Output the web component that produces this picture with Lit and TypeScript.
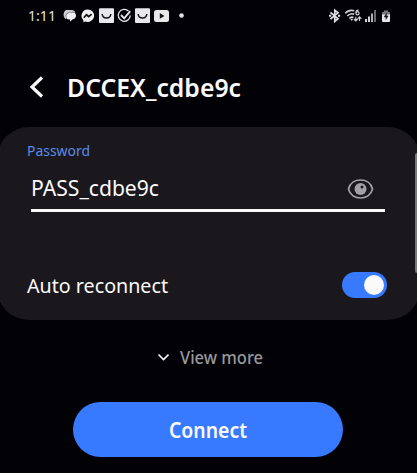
import { LitElement, html, svg, css } from "lit";
import { customElement, property, state } from "lit/decorators.js";

/** A line of text set to an exact measure, like the narrow system typeface. */
@customElement("fit-text")
class FitText extends LitElement {
  @property() text = "";
  @property({ type: Number }) measure = 0;
  @property({ type: Number }) line = 0;
  @property({ type: Number }) baseline = 0;

  static styles = css`
    :host { display: block; flex: none; }
    svg { display: block; overflow: visible; }
    text { fill: currentColor; }
  `;

  render() {
    return html`<svg width=${this.measure} height=${this.line}>
      ${svg`<text x="0" y=${this.baseline} textLength=${this.measure} lengthAdjust="spacingAndGlyphs">${this.text}</text>`}
    </svg>`;
  }
}

@customElement("app-root")
class AppRoot extends LitElement {
  @state() private reconnect = true;

  static styles = css`
    :host {
      display: block;
      position: relative;
      width: 417px;
      height: 473px;
      overflow: hidden;
      background: #020106;
      color: #fafafa;
      font-family: "Noto Sans", sans-serif;
    }
    svg { display: block; flex: none; }
    .status {
      display: flex;
      align-items: center;
      box-sizing: border-box;
      height: 32px;
      padding: 0 26px 0 28px;
      color: #e4e4e6;
      font-size: 14.5px;
    }
    .clock { margin-right: 4px; }
    .spacer { flex: 1; }
    .head {
      display: flex;
      align-items: center;
      height: 95px;
      padding: 15px 0 0 29px;
      box-sizing: border-box;
    }
    .title { font-size: 25.5px; font-weight: 600; margin-left: 22px; }
    .card {
      box-sizing: border-box;
      height: 193px;
      margin: 0 -3px;
      padding: 14px 33px 0 30px;
      border-radius: 32px;
      background: #1a181d;
    }
    .caption { font-size: 15px; color: #5a8ae6; }
    .field {
      display: flex;
      justify-content: space-between;
      align-items: center;
      box-sizing: border-box;
      height: 51px;
      margin: 0 2px 0 4px;
      padding: 8px 11px 0 0;
      border-bottom: 3px solid #fafafa;
    }
    .value { font-size: 22px; }
    .row {
      display: flex;
      justify-content: space-between;
      align-items: center;
      margin-top: 57px;
      height: 32px;
    }
    .name { font-size: 20.8px; }
    .toggle {
      display: flex;
      box-sizing: border-box;
      width: 45px;
      height: 26px;
      padding: 3px;
      border-radius: 13px;
      background: #5a5a60;
    }
    .toggle.on { justify-content: flex-end; background: #387aff; }
    .knob { width: 20px; height: 20px; border-radius: 50%; background: #fafafa; }
    .more {
      display: flex;
      align-items: center;
      height: 74px;
      margin-left: 157px;
      color: #99989c;
    }
    .more-text { font-size: 17.5px; font-weight: 500; margin-left: 11px; }
    .connect {
      display: flex;
      justify-content: center;
      align-items: center;
      width: 270px;
      height: 55px;
      margin: 8px 0 0 73px;
      border-radius: 28px;
      background: #387aff;
    }
    .connect-text { font-size: 20.8px; font-weight: 600; }
    .scroll {
      position: absolute;
      right: -2px;
      top: 153px;
      width: 4px;
      height: 120px;
      border-radius: 2px;
      background: #78777b;
    }
  `;

  private notifications() {
    const bag = (x: number) => svg`
      <rect x=${x} y="8.300" width="15" height="14.700" rx="1" fill="#e8e8ea"/>
      <path d="M${x + 3.2} 14 Q${x + 3.5} 18 ${x + 7.5} 18 T${x + 11.8} 14" fill="none" stroke="#17171b" stroke-width="1.5"/>`;
    return html`<svg width="126" height="32" viewBox="60 0 126 32">
      <path d="M66 10h6q2.500 0 3.500 2.500l-8 1-1.500 5.500h-.5q-2-1.500-2-4.500t2.500-4.500z" fill="#d0d0d4"/>
      <path d="M66.500 18.500q-1-6 4.500-6.500 5-.3 5 3.500 0 3-3.600 4l-2.400 2.300v-2.300q-2.500.2-3.500-1z" fill="#f0f0f2"/>
      <path d="M74.500 12.300h-5q-4 .8-4 4.200" fill="none" stroke="#505056" stroke-width=".6"/>
      <path d="M87.500 9.500a6.400 6.200 0 1 1-2 12l-2 .8-.2-2.300a6.300 6.200 0 0 1 4.200-10.500z" fill="#f0f0f2"/>
      <path d="M83.800 17.800l2.700-3 2.200 1.900 2.900-2.600" fill="none" stroke="#111" stroke-width="1.700"/>
      ${bag(99)}
      <path d="M128.500 11A6 6 0 1 0 130.300 15.500" fill="none" stroke="#e4e4e6" stroke-width="1.300"/>
      <path d="M121 15l3.200 3.400 6-7.200" fill="none" stroke="#e4e4e6" stroke-width="1.900"/>
      ${bag(135)}
      <rect x="154" y="10" width="15" height="12" rx="2.500" fill="#e8e8ea"/>
      <path d="M159.800 13v5.800l4.600-2.900z" fill="#111"/>
      <circle cx="181.500" cy="15.500" r="2.300" fill="#e4e4e6"/>
    </svg>`;
  }

  private system() {
    return html`<svg width="64" height="32" viewBox="327 0 64 32">
      <path d="M330.500 12.500l7.500 6.200-3.200 2.800V10.200l3.200 2.600-7.500 6.200" fill="none" stroke="#e0e0e2" stroke-width="1.700"/>
      <path d="M329 15.800h2.200M338 15.800h2.200" stroke="#e0e0e2" stroke-width="2"/>
      <g fill="none" stroke="#d0d0d4" stroke-width="1.600">
        <path d="M345.300 13.300q3.500-4 9-2.500"/>
        <path d="M347.300 16q3-3.300 6.900-1.800"/>
        <path d="M349.300 18.500q1.900-2 4.200-1"/>
      </g>
      <g fill="none" stroke="#d0d0d4" stroke-width="1.200">
        <path d="M358.500 10.200q-2.500 0-2.600 2.800"/>
        <circle cx="357.500" cy="13.300" r="1.600"/>
      </g>
      <path d="M350.200 18.800h3l-1.500 2.300z" fill="#d0d0d4"/>
      <path d="M355.800 16.800v4M353.900 19l1.900 2 1.900-2M359.500 21v-4M357.600 18.800l1.900-2 1.900 2" fill="none" stroke="#d0d0d4" stroke-width="1.100"/>
      <path d="M365 19h2v3h-2zM368 16.500h2v5.500h-2z" fill="#d4d4d8"/>
      <path d="M371 13.500h2v8.500h-2z" fill="#b0b0b4"/>
      <path d="M374 10h2v12h-2z" fill="#68686e"/>
      <path d="M384 10.500h4v1.500h1q1 0 1 1v3h-8v-3q0-1 1-1h1z" fill="#77777c"/>
      <path d="M382 14.500h8v6.500q0 1-1 1h-6q-1 0-1-1z" fill="#e8e8ea"/>
      <path d="M386.700 12.500l-3 4.700h2v3l2.900-4.400h-1.900z" fill="#17171b"/>
    </svg>`;
  }

  render() {
    return html`
      <div class="status">
        <fit-text class="clock" text="1:11" measure="28" line="32" baseline="20.800"></fit-text>
        ${this.notifications()}
        <div class="spacer"></div>
        ${this.system()}
      </div>
      <div class="head">
        <svg width="16" height="24" viewBox="0 0 16 24">
          <path d="M13 2.500L3 12l10 9.500" fill="none" stroke="#fafafa" stroke-width="3.200"/>
        </svg>
        <fit-text class="title" text="DCCEX_cdbe9c" measure="174" line="32" baseline="25.500"></fit-text>
      </div>
      <div class="card">
        <fit-text class="caption" text="Password" measure="63" line="20" baseline="15"></fit-text>
        <div class="field">
          <fit-text class="value" text="PASS_cdbe9c" measure="128" line="30" baseline="21.500"></fit-text>
          <svg width="27" height="22" viewBox="0 0 27 22">
            <path d="M1.500 11C3 5 8 2 13.500 2S24 5 25.500 11C24 17 19 20 13.500 20S3 17 1.500 11z" fill="none" stroke="#a2a1a5" stroke-width="1.700"/>
            <circle cx="13.500" cy="11" r="6" fill="#a2a1a5"/>
            <circle cx="15" cy="9" r="1.500" fill="#1a181d"/>
          </svg>
        </div>
        <div class="row">
          <fit-text class="name" text="Auto reconnect" measure="141" line="32" baseline="24"></fit-text>
          <div class="toggle ${this.reconnect ? "on" : ""}" @click=${() => (this.reconnect = !this.reconnect)}>
            <div class="knob"></div>
          </div>
        </div>
      </div>
      <div class="more">
        <svg width="12" height="8" viewBox="0 0 12 8">
          <path d="M1.500 1.500L6.500 6.500l5-5" fill="none" stroke="#fafafa" stroke-width="1.600"/>
        </svg>
        <fit-text class="more-text" text="View more" measure="83" line="24" baseline="18.500"></fit-text>
      </div>
      <div class="connect">
        <fit-text class="connect-text" text="Connect" measure="78" line="30" baseline="22.500"></fit-text>
      </div>
      <div class="scroll"></div>
    `;
  }
}
